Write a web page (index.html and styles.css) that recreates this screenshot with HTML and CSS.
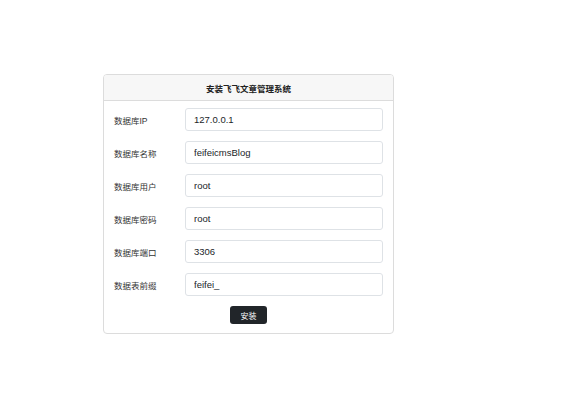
FILE: index.html
```html
<!DOCTYPE html>
<html lang="zh">
<head>
<meta charset="utf-8">
<title>安装飞飞文章管理系统</title>
<link rel="stylesheet" href="styles.css">
</head>
<body>
<div class="card">
  <div class="card-header">安装飞飞文章管理系统</div>
  <form class="card-body">
    <div class="row"><label class="label">数据库IP</label><input class="input" type="text" value="127.0.0.1"></div>
    <div class="row"><label class="label">数据库名称</label><input class="input" type="text" value="feifeicmsBlog"></div>
    <div class="row"><label class="label">数据库用户</label><input class="input" type="text" value="root"></div>
    <div class="row"><label class="label">数据库密码</label><input class="input" type="text" value="root"></div>
    <div class="row"><label class="label">数据库端口</label><input class="input" type="text" value="3306"></div>
    <div class="row"><label class="label">数据表前缀</label><input class="input" type="text" value="feifei_"></div>
    <div class="actions"><button class="btn" type="button">安装</button></div>
  </form>
</div>
</body>
</html>
```

FILE: styles.css
```css
html, body {
  margin: 0;
  padding: 0;
  background: #ffffff;
}
body {
  font-family: "Liberation Sans", "Noto Sans CJK SC", sans-serif;
  color: #212529;
}
.card {
  margin: 74px 0 0 103px;
  width: 289px;
  border: 1px solid #dcdcdc;
  border-radius: 4px;
  overflow: hidden;
}
.card-header {
  height: 25px;
  background: #f7f7f7;
  border-bottom: 1px solid #dcdcdc;
  display: flex;
  align-items: center;
  justify-content: center;
  font-size: 8.5px;
  font-weight: bold;
  color: #222;
}
.card-body {
  margin: 0;
  padding: 7px 10px 9px 10px;
  display: flex;
  flex-direction: column;
  gap: 10px;
}
.row {
  display: flex;
  align-items: center;
  height: 23px;
}
.label {
  width: 71px;
  flex: none;
  font-size: 8.5px;
  color: #333;
}
.input {
  flex: 1;
  min-width: 0;
  height: 23px;
  box-sizing: border-box;
  border: 1px solid #dee2e6;
  border-radius: 3px;
  padding: 0 8px;
  font-family: "Liberation Sans", sans-serif;
  font-size: 9.5px;
  color: #212529;
  background: #fff;
  outline: none;
}
.actions {
  display: flex;
  justify-content: center;
}
.btn {
  width: 37px;
  height: 18px;
  padding: 0;
  border: none;
  border-radius: 3px;
  background: #212529;
  color: #fff;
  font-family: "Liberation Sans", "Noto Sans CJK SC", sans-serif;
  font-size: 8px;
  cursor: pointer;
}
```
